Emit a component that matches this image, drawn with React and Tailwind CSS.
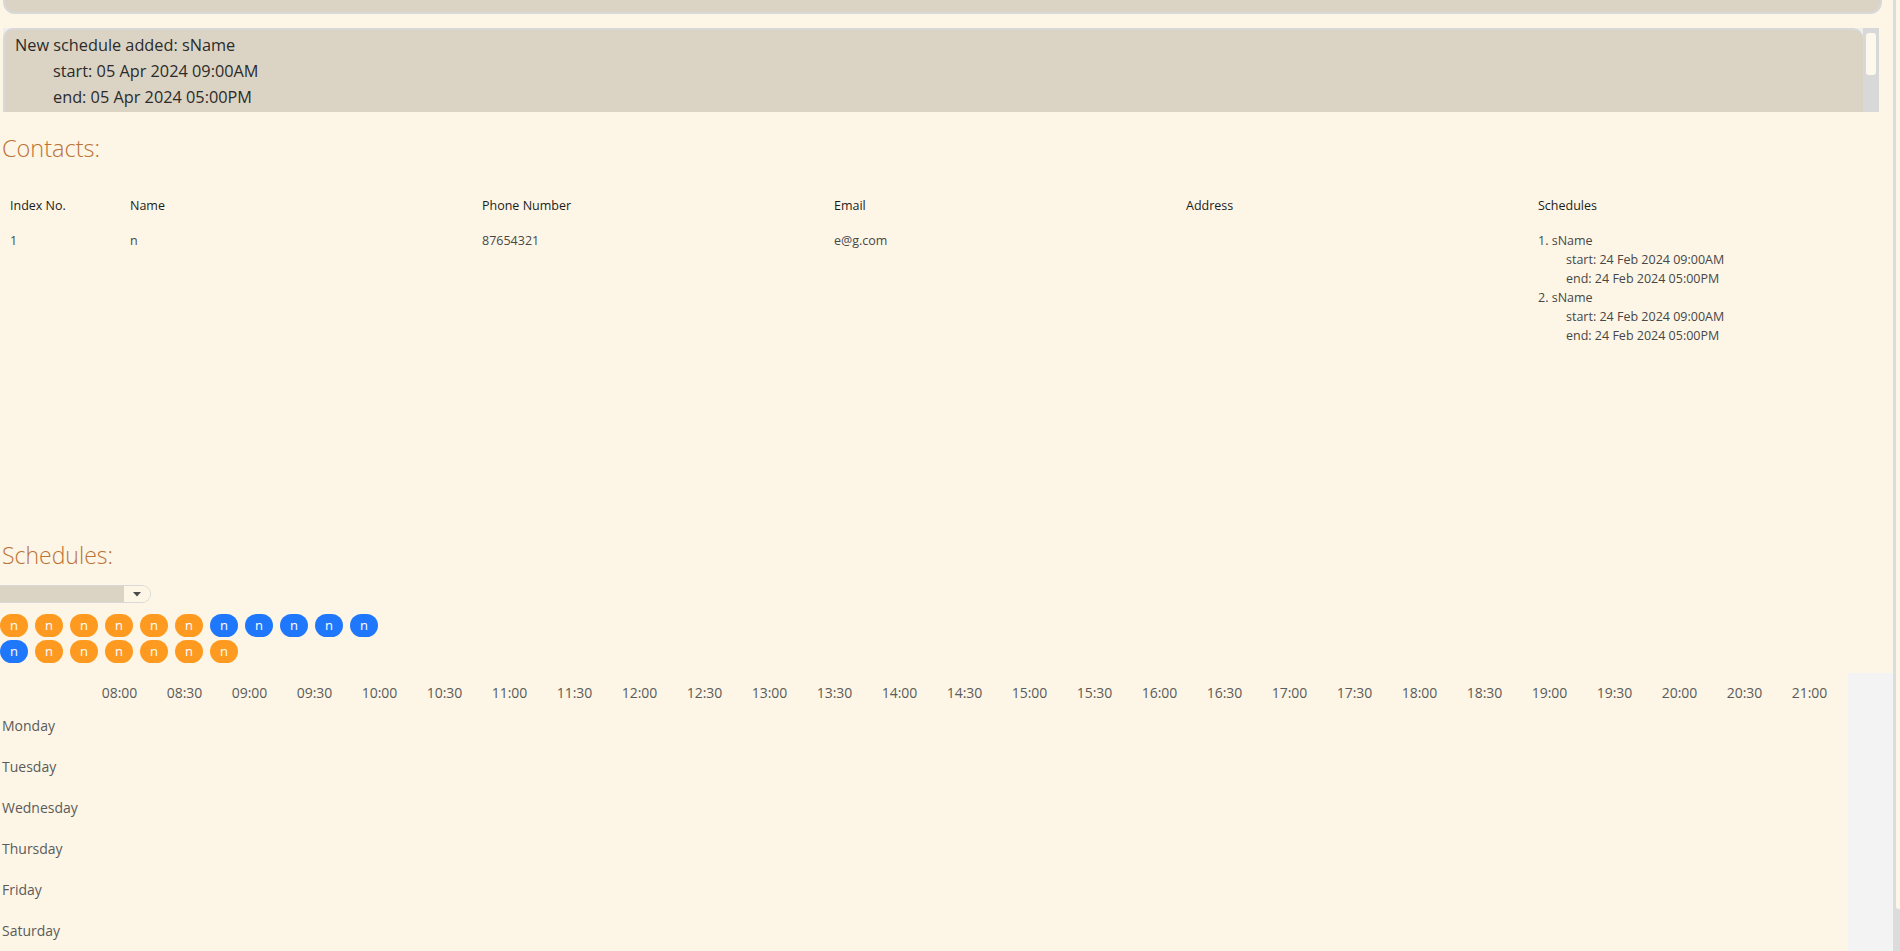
import React from "react";

const times = [];
for (let h = 8; h <= 21; h++) {
  const hh = String(h).padStart(2, "0");
  times.push(`${hh}:00`);
  if (h < 21) times.push(`${hh}:30`);
}
const days = ["Monday", "Tuesday", "Wednesday", "Thursday", "Friday", "Saturday"];
const pills = [
  "o", "o", "o", "o", "o", "o", "b", "b", "b", "b", "b",
  "b", "o", "o", "o", "o", "o", "o",
];

function Pill({ c }) {
  return (
    <div
      className={
        "w-[28px] h-[23px] rounded-full flex items-center justify-center text-white text-[13px] leading-none " +
        (c === "o" ? "bg-[#fe9a20]" : "bg-[#1f77fb]")
      }
    >
      n
    </div>
  );
}

export default function App() {
  return (
    <div
      className="w-[1900px] h-[951px] overflow-hidden bg-[#fdf6e6] flex"
      style={{ fontFamily: '"Open Sans", "Noto Sans", sans-serif' }}
    >
      <div className="w-[1893px] shrink-0 flex flex-col">
        {/* command box (scrolled) */}
        <div className="shrink-0 ml-[3px] w-[1879px] h-[14px] bg-[#dbd4c4] rounded-b-[12px] border-2 border-t-0 border-[#d8d8d8]" />

        {/* result display */}
        <div className="shrink-0 mt-[14px] ml-[3px] w-[1876px] h-[84px] flex bg-[#eeeeee]">
          <div className="flex-1 bg-[#dbd4c4] rounded-t-[10px] border-t-2 border-l-2 border-[#d8d8d8] pl-[10px] pt-[2px] text-[16.3px] leading-[26px] text-[#2b2b2b] overflow-hidden">
            <div>New schedule added: sName</div>
            <div className="pl-[38px]">start: 05 Apr 2024 09:00AM</div>
            <div className="pl-[38px]">end: 05 Apr 2024 05:00PM</div>
          </div>
          <div className="w-[16px] bg-[#d8d8d8] pt-[5px] flex justify-center">
            <div className="w-[10px] h-[42px] bg-[#fdf8ec] rounded-[3px]" />
          </div>
        </div>

        {/* Contacts heading */}
        <div className="shrink-0 mt-[20px] pl-[2px] h-[32px] text-[23.5px] leading-[32px] font-light text-[#bb7236]">
          Contacts:
        </div>

        {/* table */}
        <div className="shrink-0 h-[375px] pt-[32px] text-[12.5px] leading-[19px]">
          <div className="grid grid-cols-[120px_repeat(5,352px)] text-[#1c1c1c]">
            {["Index No.", "Name", "Phone Number", "Email", "Address", "Schedules"].map((h) => (
              <div key={h} className="pl-[10px]">{h}</div>
            ))}
          </div>
          <div className="mt-[16px] grid grid-cols-[120px_repeat(5,352px)] text-[#474747]">
            <div className="pl-[10px]">1</div>
            <div className="pl-[10px]">n</div>
            <div className="pl-[10px]">87654321</div>
            <div className="pl-[10px]">e@g.com</div>
            <div className="pl-[10px]"></div>
            <div className="pl-[10px]">
              <div>1. sName</div>
              <div className="pl-[28px]">start: 24 Feb 2024 09:00AM</div>
              <div className="pl-[28px]">end: 24 Feb 2024 05:00PM</div>
              <div>2. sName</div>
              <div className="pl-[28px]">start: 24 Feb 2024 09:00AM</div>
              <div className="pl-[28px]">end: 24 Feb 2024 05:00PM</div>
            </div>
          </div>
        </div>

        {/* Schedules heading */}
        <div className="shrink-0 pl-[2px] h-[32px] text-[23px] leading-[32px] font-light text-[#bb7236]">
          Schedules:
        </div>

        {/* combo box */}
        <div className="shrink-0 mt-[14px] w-[151px] h-[18px] flex rounded-r-[9px] border border-l-0 border-[#d8d8d8] overflow-hidden">
          <div className="w-[124px] bg-[#dbd4c4]" />
          <div className="flex-1 bg-[#fdf6e6] flex items-center justify-center pr-[1px]">
            <svg width="8" height="5" viewBox="0 0 8 5">
              <path d="M0 0 L8 0 L4 4.5 Z" fill="#4a4a4a" />
            </svg>
          </div>
        </div>

        {/* pills */}
        <div className="shrink-0 mt-[11px] w-[400px] flex flex-wrap gap-x-[7px] gap-y-[3px]">
          {pills.map((c, i) => (
            <Pill key={i} c={c} />
          ))}
        </div>

        {/* timeline */}
        <div className="shrink-0 mt-[10px] h-[320px] flex">
          <div className="w-[1848px] text-[14px] text-[#5b5b5b]">
            <div className="h-[32px] pt-[10px] grid grid-cols-[87px_repeat(27,65px)] leading-[20px]">
              <div />
              {times.map((t) => (
                <div key={t} className="text-center">{t}</div>
              ))}
            </div>
            {days.map((d) => (
              <div key={d} className="h-[41px] flex items-center pl-[2px]">
                {d}
              </div>
            ))}
          </div>
          <div className="w-[45px] bg-[#f3f3f3]" />
        </div>
      </div>

      {/* page scrollbar */}
      <div className="w-[7px] shrink-0 flex">
        <div className="w-[3px] bg-[#dcdcdc]" />
        <div className="w-[4px] bg-[#dcdcdc]">
          <div className="h-[909px] bg-[#fdf7e8] rounded-bl-[3px]" />
        </div>
      </div>
    </div>
  );
}
